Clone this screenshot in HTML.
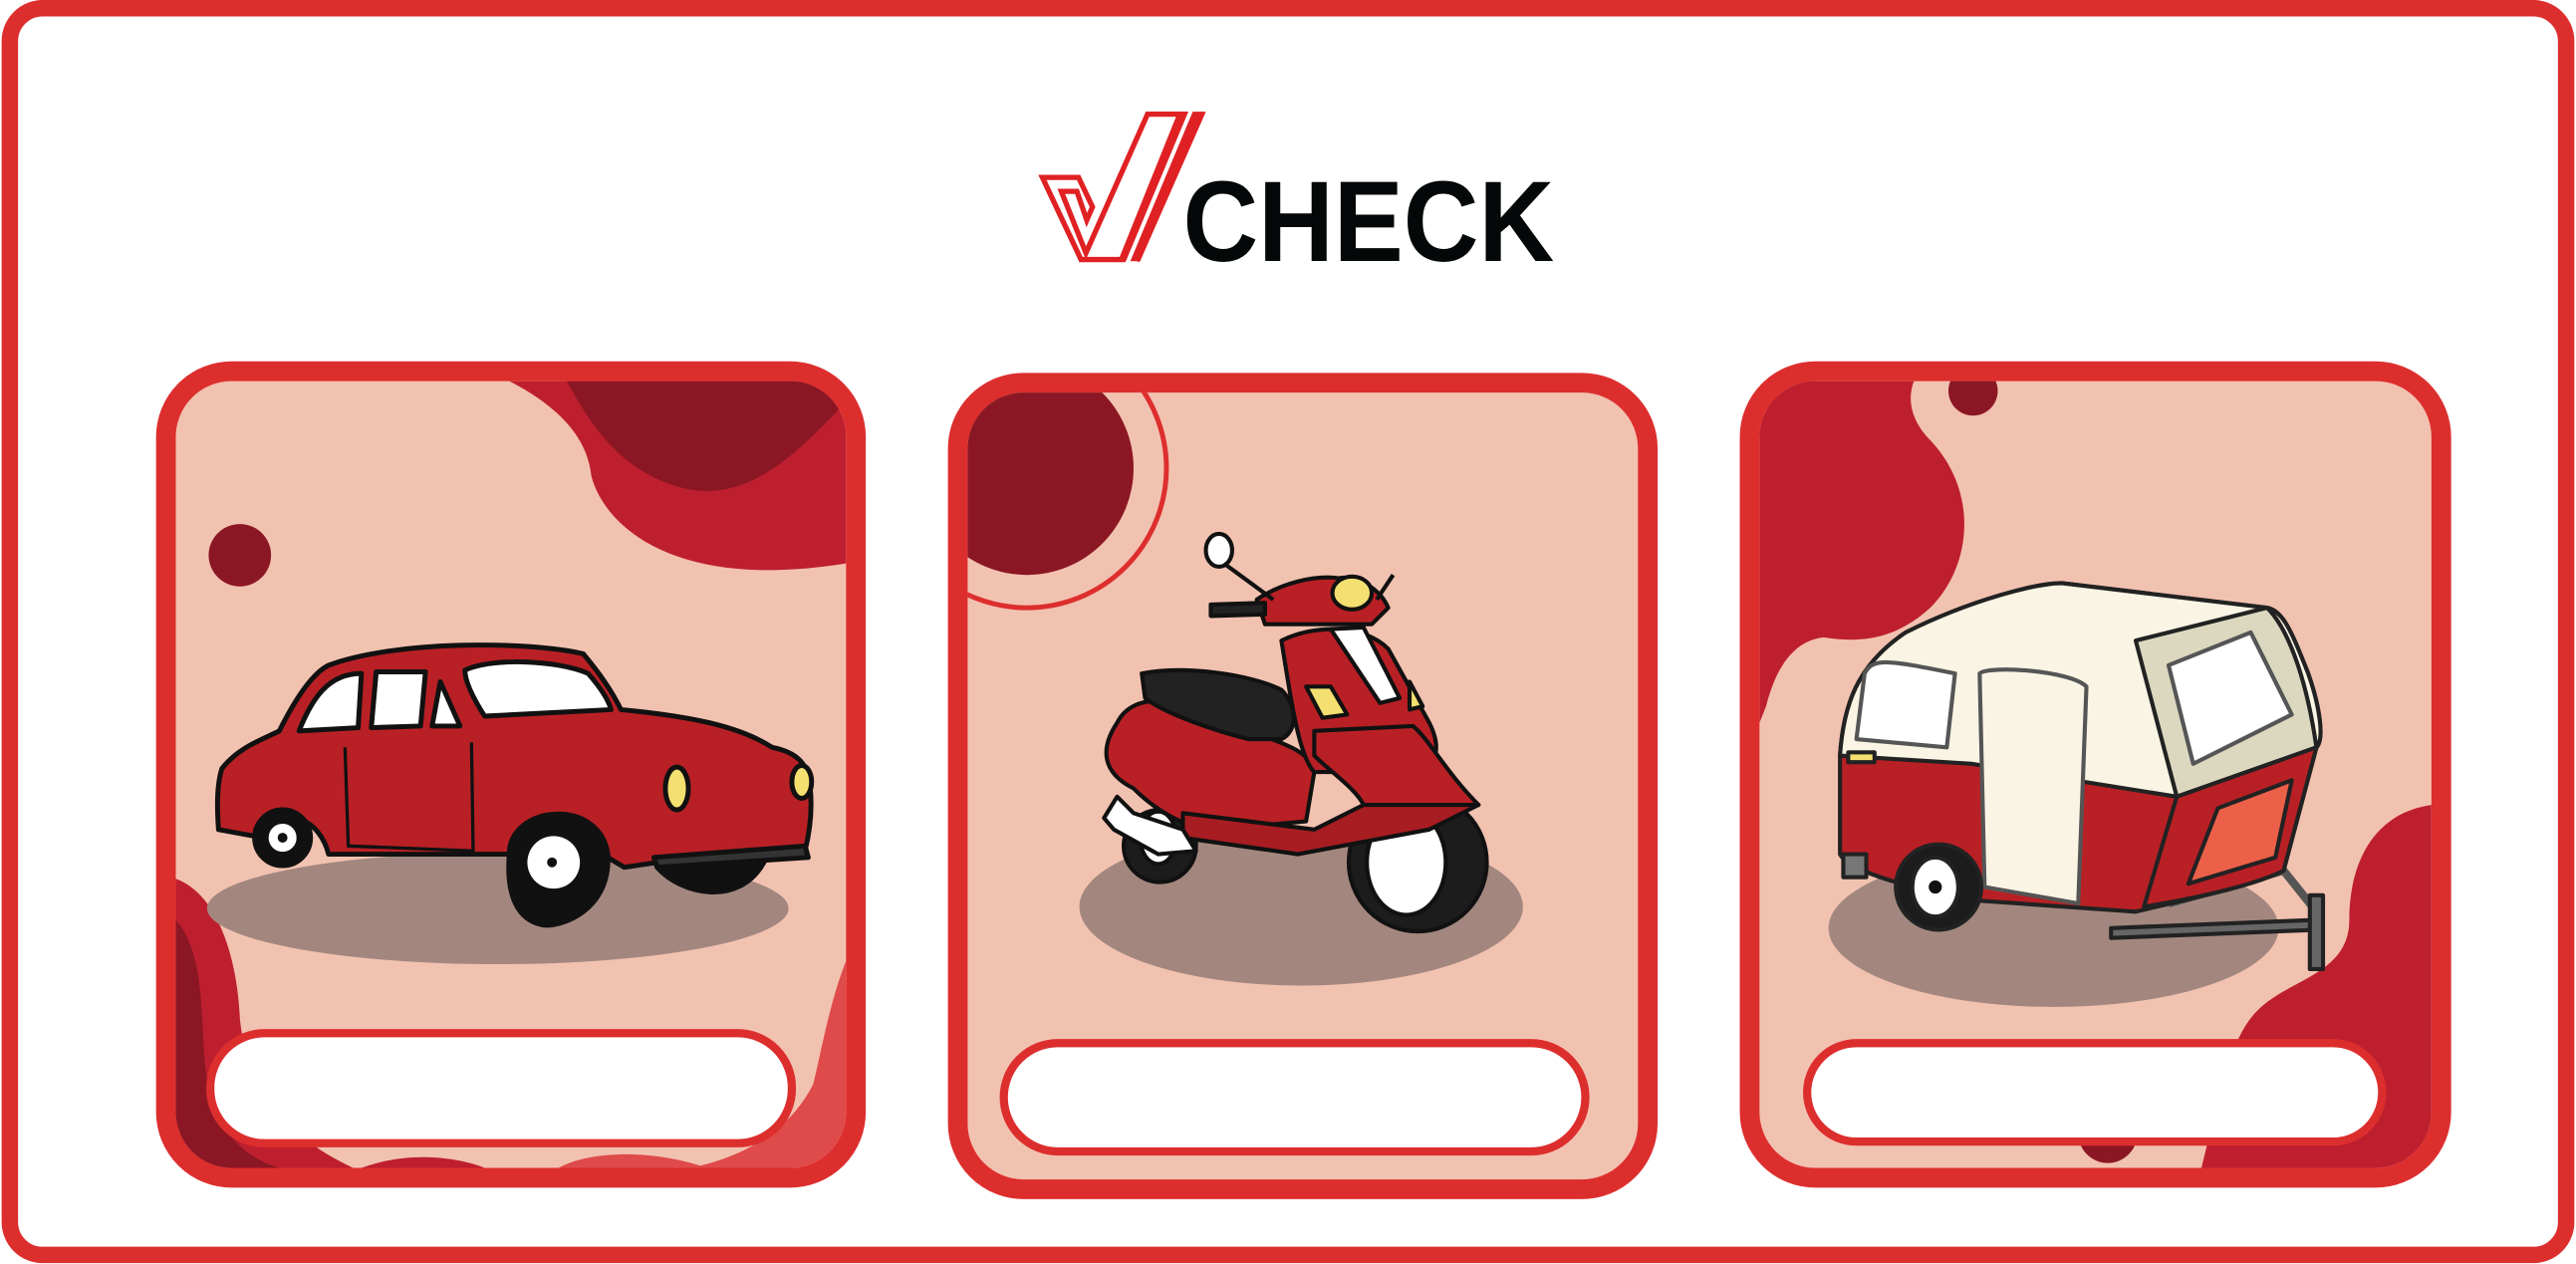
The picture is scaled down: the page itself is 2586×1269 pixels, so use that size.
<!DOCTYPE html>
<html><head><meta charset="utf-8"><style>
html,body{margin:0;padding:0;background:#fff;width:2586px;height:1269px;overflow:hidden}
svg{display:block}
</style></head><body>
<svg width="2586" height="1269" viewBox="0 0 1568 769.5" preserveAspectRatio="none" xmlns="http://www.w3.org/2000/svg">
<defs>
<clipPath id="c1"><rect x="107" y="232" width="408" height="479" rx="34"/></clipPath>
<clipPath id="c2"><rect x="589" y="239" width="408" height="479" rx="34"/></clipPath>
<clipPath id="c3"><rect x="1071" y="232" width="409" height="479" rx="34"/></clipPath>
</defs>
<rect x="0" y="0" width="1568" height="769.5" fill="#fff"/>
<rect x="6" y="5" width="1556" height="759" rx="20" fill="none" stroke="#dd2e2e" stroke-width="10"/>

<!-- logo -->
<g fill="none" stroke="#e02124" stroke-width="3.2" stroke-linejoin="miter">
<path d="M634.5 108 L656.5 108 L665 126 L661.5 134 L655.5 116.5 L646 116.5 L661 154 L698.5 69.5 L721 69.5 L684 158 L680 158 L666.5 158 L658 158 Z"/>
<path d="M718 70 L683 157"/>
<path d="M732 68.5 L692 159"/>
</g>
<path d="M726 68 L734 68 L694 159 L688 159 Z" fill="#e02124"/>
<text x="720" y="159" font-family="Liberation Sans, sans-serif" font-weight="bold" font-size="70" fill="#050808" textLength="226" lengthAdjust="spacingAndGlyphs">CHECK</text>

<!-- card 1 -->
<rect x="101" y="226" width="420" height="491" rx="40" fill="#f2c2b0" stroke="#dd2e2e" stroke-width="12"/>
<g clip-path="url(#c1)">
<path d="M310 232 C345 250 358 270 360 290 C368 320 410 360 515 343 L515 232 Z" fill="#be1f2e"/>
<path d="M345 232 C360 260 380 290 420 298 C460 305 490 270 515 245 L515 232 Z" fill="#8c1724"/>
<path d="M107 535 C135 545 145 590 146 620 C150 660 170 690 215 711 L107 711 Z" fill="#be1f2e"/>
<path d="M107 560 C125 580 122 620 125 650 C130 690 150 705 170 711 L107 711 Z" fill="#8c1724"/>
<path d="M515 585 C505 610 500 640 495 660 C480 690 450 705 420 711 L515 711 Z" fill="#df4a4a"/>
<path d="M340 711 C360 700 400 700 430 711 Z" fill="#df4a4a"/>
<path d="M220 711 C250 700 280 705 295 711 Z" fill="#be1f2e"/>
</g>
<circle cx="146" cy="338" r="19" fill="#8c1724"/>
<ellipse cx="303" cy="553" rx="177" ry="34" fill="#a3877f"/>
<!-- car -->
<g stroke="#111" stroke-width="3" stroke-linejoin="round">
<path d="M135 468 C145 455 160 450 170 445 C180 425 190 410 200 405 C240 390 320 390 355 398 C365 410 372 420 378 432 C420 436 450 442 470 455 C485 458 492 465 493 478 C495 495 492 510 490 518 L400 525 L380 528 L370 522 C360 500 320 495 310 520 L200 520 C195 500 175 488 160 510 L133 505 C132 490 132 478 135 468 Z" fill="#b92025"/>
<path d="M182 445 L218 443 L220 410 C200 410 190 425 182 445 Z" fill="#fff"/>
<path d="M226 443 L256 442 L259 409 L229 409 Z" fill="#fff"/>
<path d="M263 442 L280 442 L268 415 Z" fill="#fff"/>
<path d="M283 408 C300 400 340 402 358 410 C365 418 370 425 372 432 L295 436 C288 425 283 415 283 408 Z" fill="#fff"/>
<path d="M398 522 L490 515 L492 522 L400 528 Z" fill="#333"/>
<ellipse cx="412" cy="480" rx="7" ry="13" fill="#f4e070"/>
<ellipse cx="488" cy="476" rx="6" ry="10" fill="#f4e070"/>
<circle cx="172" cy="510" r="17" fill="#111"/>
<circle cx="172" cy="510" r="10" fill="#fff"/>
<path d="M310 520 C310 490 365 485 370 520 C372 555 340 565 330 563 C315 560 308 545 310 520 Z" fill="#111"/>
<circle cx="337" cy="525" r="23" fill="#111"/>
<circle cx="337" cy="525" r="16" fill="#fff" stroke="none"/>
<path d="M400 528 C415 545 450 552 465 525 Z" fill="#111"/>
<path d="M210 455 L212 515 L288 518 L287 452" fill="none" stroke-width="2"/>
</g>
<circle cx="336" cy="525" r="3" fill="#111"/>
<circle cx="172" cy="510" r="3" fill="#111"/>
<rect x="128" y="629" width="354" height="67" rx="33" fill="#fff" stroke="#dd2e2e" stroke-width="5"/>

<!-- card 2 -->
<rect x="583" y="233" width="420" height="491" rx="40" fill="#f2c2b0" stroke="#dd2e2e" stroke-width="12"/>
<g clip-path="url(#c2)">
<circle cx="625" cy="285" r="85" fill="none" stroke="#dd2e2e" stroke-width="3"/>
<circle cx="625" cy="285" r="65" fill="#8c1724"/>
</g>
<ellipse cx="792" cy="552" rx="135" ry="48" fill="#a3877f"/>
<g stroke="#111" stroke-width="2.5" stroke-linejoin="round">
<circle cx="863" cy="525" r="42" fill="#1c1c1c"/>
<ellipse cx="856" cy="525" rx="24" ry="32" fill="#fff"/>
<circle cx="706" cy="515" r="22" fill="#1c1c1c"/>
<ellipse cx="705" cy="510" rx="11" ry="16" fill="#fff"/>
<path d="M680 440 C690 420 720 425 740 440 L760 445 C790 455 798 460 800 470 L795 500 L740 505 C720 505 700 490 690 480 C670 470 670 455 680 440 Z" fill="#b92025"/>
<path d="M695 410 C720 405 760 410 780 420 C790 430 790 445 780 450 L760 450 C740 445 710 435 697 425 Z" fill="#222"/>
<path d="M780 390 C800 380 830 380 845 395 L870 440 C880 460 870 470 860 470 L800 470 C790 460 785 420 780 390 Z" fill="#b92025"/>
<path d="M800 445 L860 442 C870 450 880 470 900 490 L830 490 C825 480 810 470 800 460 Z" fill="#b92025"/>
<path d="M720 495 L800 505 L830 490 L900 490 L870 505 L790 520 L720 510 Z" fill="#a81d22"/>
<path d="M810 383 L830 382 L852 425 L840 428 Z" fill="#fff"/>
<path d="M795 418 L810 418 L820 435 L805 437 Z" fill="#f4e070"/>
<path d="M858 415 L866 430 L858 432 Z" fill="#f4e070"/>
<path d="M765 365 C780 355 800 350 815 352 C825 350 840 358 845 370 L835 380 L770 380 Z" fill="#b92025"/>
<ellipse cx="823" cy="361" rx="12" ry="10" fill="#f4e070"/>
<path d="M737 368 L770 367 L770 374 L737 375 Z" fill="#222"/>
<ellipse cx="742" cy="335" rx="8" ry="10" fill="#fff"/>
<path d="M745 343 L775 365" fill="none"/>
<path d="M838 365 L848 350" fill="none"/>
<path d="M680 485 L690 495 L720 505 L728 518 L705 520 L678 505 L672 498 Z" fill="#fff"/>
</g>
<rect x="611" y="635" width="354" height="66" rx="33" fill="#fff" stroke="#dd2e2e" stroke-width="5"/>

<!-- card 3 -->
<rect x="1065" y="226" width="421" height="491" rx="40" fill="#f2c2b0" stroke="#dd2e2e" stroke-width="12"/>
<g clip-path="url(#c3)">
<path d="M1071 232 L1165 232 C1160 245 1165 258 1175 268 C1205 300 1200 345 1175 370 C1155 388 1135 392 1110 388 C1090 390 1080 410 1075 430 L1071 440 Z" fill="#be1f2e"/>
<circle cx="1201" cy="238" r="15" fill="#8c1724"/>
<path d="M1480 490 C1445 495 1430 525 1430 560 C1430 590 1400 595 1380 610 C1360 625 1355 650 1340 711 L1480 711 Z" fill="#be1f2e"/>
<circle cx="1283" cy="690" r="18" fill="#8c1724"/>
</g>
<ellipse cx="1250" cy="565" rx="137" ry="48" fill="#a3877f"/>
<g stroke="#222" stroke-width="2.5" stroke-linejoin="round">
<path d="M1285 565 L1410 560 L1412 566 L1285 571 Z" fill="#666"/>
<path d="M1320 550 L1390 530 L1410 555" fill="none" stroke="#555" stroke-width="5"/>
<rect x="1406" y="545" width="8" height="45" fill="#666"/>
<path d="M1120 460 C1122 430 1130 405 1160 385 C1200 365 1240 355 1255 355 L1380 370 C1390 372 1395 385 1405 410 C1412 430 1415 450 1410 455 L1390 530 C1370 540 1320 550 1300 555 L1200 548 C1160 540 1125 530 1120 520 Z" fill="#b92025"/>
<path d="M1120 460 C1122 430 1130 405 1160 385 C1200 365 1240 355 1255 355 L1380 370 C1390 372 1395 385 1405 410 C1412 430 1415 450 1410 455 L1325 485 L1200 465 Z" fill="#faf4e4"/>
<path d="M1300 390 L1380 370 C1395 385 1405 420 1410 455 L1325 485 Z" fill="#dcd8c0"/>
<path d="M1325 485 L1410 455 L1390 530 C1370 540 1330 548 1305 552 Z" fill="#b92025"/>
<path d="M1350 492 L1395 475 L1385 522 L1332 538 Z" fill="#ec6049"/>
<path d="M1320 405 L1370 385 L1395 435 L1335 465 Z" fill="#fff" stroke="#555"/>
<path d="M1135 410 C1140 400 1150 402 1190 410 L1185 455 L1130 450 Z" fill="#fff" stroke="#555"/>
<path d="M1205 410 C1210 405 1260 408 1270 418 L1265 550 L1208 540 Z" fill="#faf4e4" stroke="#555"/>
<circle cx="1180" cy="540" r="26" fill="#1c1c1c"/>
<ellipse cx="1178" cy="540" rx="14" ry="18" fill="#fff"/>
<rect x="1122" y="520" width="14" height="14" fill="#777"/>
<rect x="1125" y="458" width="16" height="6" fill="#f4e070"/>
</g>
<circle cx="1178" cy="540" r="4" fill="#111"/>
<rect x="1100" y="635" width="350" height="60" rx="30" fill="#fff" stroke="#dd2e2e" stroke-width="5"/>
</svg>
</body></html>
